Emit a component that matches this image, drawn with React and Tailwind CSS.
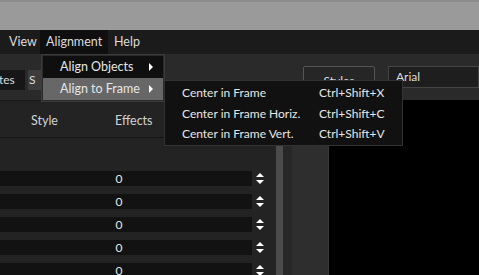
import React from "react";

const font = { fontFamily: 'Lato, "Noto Sans", sans-serif' };

function Spinner() {
  return (
    <div className="flex flex-col items-center gap-[3px] w-[8px]">
      <div className="w-0 h-0 border-l-[4px] border-r-[4px] border-b-[4px] border-l-transparent border-r-transparent border-b-white" />
      <div className="w-0 h-0 border-l-[4px] border-r-[4px] border-t-[4px] border-l-transparent border-r-transparent border-t-white" />
    </div>
  );
}

function Row() {
  return (
    <div className="flex items-center h-[15px] shrink-0">
      <div className="w-[252px] h-full bg-[#121212] flex items-center">
        <span className="w-[238px] text-center text-[12px] text-[#e6e6e6] leading-none">0</span>
      </div>
      <div className="ml-[4px]">
        <Spinner />
      </div>
    </div>
  );
}

function Arrow() {
  return (
    <div className="w-0 h-0 border-t-[4px] border-b-[4px] border-l-[4px] border-t-transparent border-b-transparent border-l-white" />
  );
}

export default function App() {
  return (
    <div
      className="relative w-[479px] h-[275px] overflow-hidden bg-[#232323] flex flex-col text-[12px]"
      style={font}
    >
      {/* title area */}
      <div className="h-[30px] bg-[#9a9a9a] border-t-2 border-[#8c8c8c] shrink-0" />
      {/* menubar */}
      <div className="h-[24px] bg-[#1b1b1b] flex items-center shrink-0 text-[#dcdcdc] text-[12.5px]">
        <div className="pl-[9px] w-[40px]">View</div>
        <div className="w-[68px] h-full bg-[#0f0f0f] flex items-center pl-[6px]">Alignment</div>
        <div className="pl-[6px]">Help</div>
      </div>
      {/* toolbar */}
      <div className="h-[46px] bg-[#2a2a2a] shrink-0 flex items-start pt-[12px] relative">
        <div className="w-[25px] h-[20px] mt-[4px] bg-[#161616] text-[#dcdcdc] flex items-center overflow-hidden">
          <span className="-ml-[1px]">tes</span>
        </div>
        <div className="ml-[3px] w-[40px] h-[20px] mt-[4px] bg-[#3c3c3c] text-[#dcdcdc] flex items-center pl-[1px]">S</div>
        <div className="ml-[235px] w-[72px] h-[20px] border border-[#555] rounded-[2px] bg-[#262626] text-[#dcdcdc] flex items-start pt-[5px] justify-center">Styles</div>
        <div className="ml-[13px] flex-1 h-[22px] border border-[#444] bg-[#1e1e1e] text-[#dcdcdc] flex items-center pl-[7px]">Arial</div>
      </div>
      {/* main */}
      <div className="flex flex-1 min-h-0">
        <div className="w-[276px] flex flex-col bg-[#232323] overflow-hidden">
          <div className="h-[38px] shrink-0 border-b border-[#151515] flex items-center text-[#cfd3d8] text-[12.5px] pt-[4px] border-t border-t-[#1a1a1a]">
            <span className="ml-[31px]">Style</span>
            <span className="ml-[57px]">Effects</span>
          </div>
          <div className="flex flex-col gap-[8px] pt-[33px] shrink-0">
            <Row />
            <Row />
            <Row />
            <Row />
            <Row />
          </div>
        </div>
        <div className="w-[7px] bg-[#4b4b4b]" />
        <div className="w-[9px] bg-[#272727]" />
        <div className="w-[36px] bg-[#2e2e2e]" />
        <div className="flex-1 bg-black border-t-2 border-l border-[#3a3a3a] -mt-[10px]" />
      </div>

      {/* dropdown menu */}
      <div className="absolute left-[41px] top-[54px] w-[124px] bg-[#2a2a2a] border border-[#3c3c3c] p-[1px] text-[#e6e6e6] text-[12.5px]">
        <div className="h-[22px] bg-[#0f0f0f] flex items-center pl-[17px] pr-[10px] justify-between">
          <span>Align Objects</span>
          <Arrow />
        </div>
        <div className="h-[22px] bg-[#676767] flex items-center pl-[17px] pr-[10px] justify-between">
          <span>Align to Frame</span>
          <Arrow />
        </div>
      </div>

      {/* submenu */}
      <div className="absolute left-[164px] top-[80px] w-[239px] h-[66px] bg-[#111111] border border-[#333] pt-[2px] text-[#e6e6e6] flex flex-col">
        {[
          ["Center in Frame", "Ctrl+Shift+X"],
          ["Center in Frame Horiz.", "Ctrl+Shift+C"],
          ["Center in Frame Vert.", "Ctrl+Shift+V"],
        ].map(([a, b]) => (
          <div key={a} className="h-[20.5px] flex items-center">
            <span className="pl-[17px] w-[154px]">{a}</span>
            <span>{b}</span>
          </div>
        ))}
      </div>
    </div>
  );
}
